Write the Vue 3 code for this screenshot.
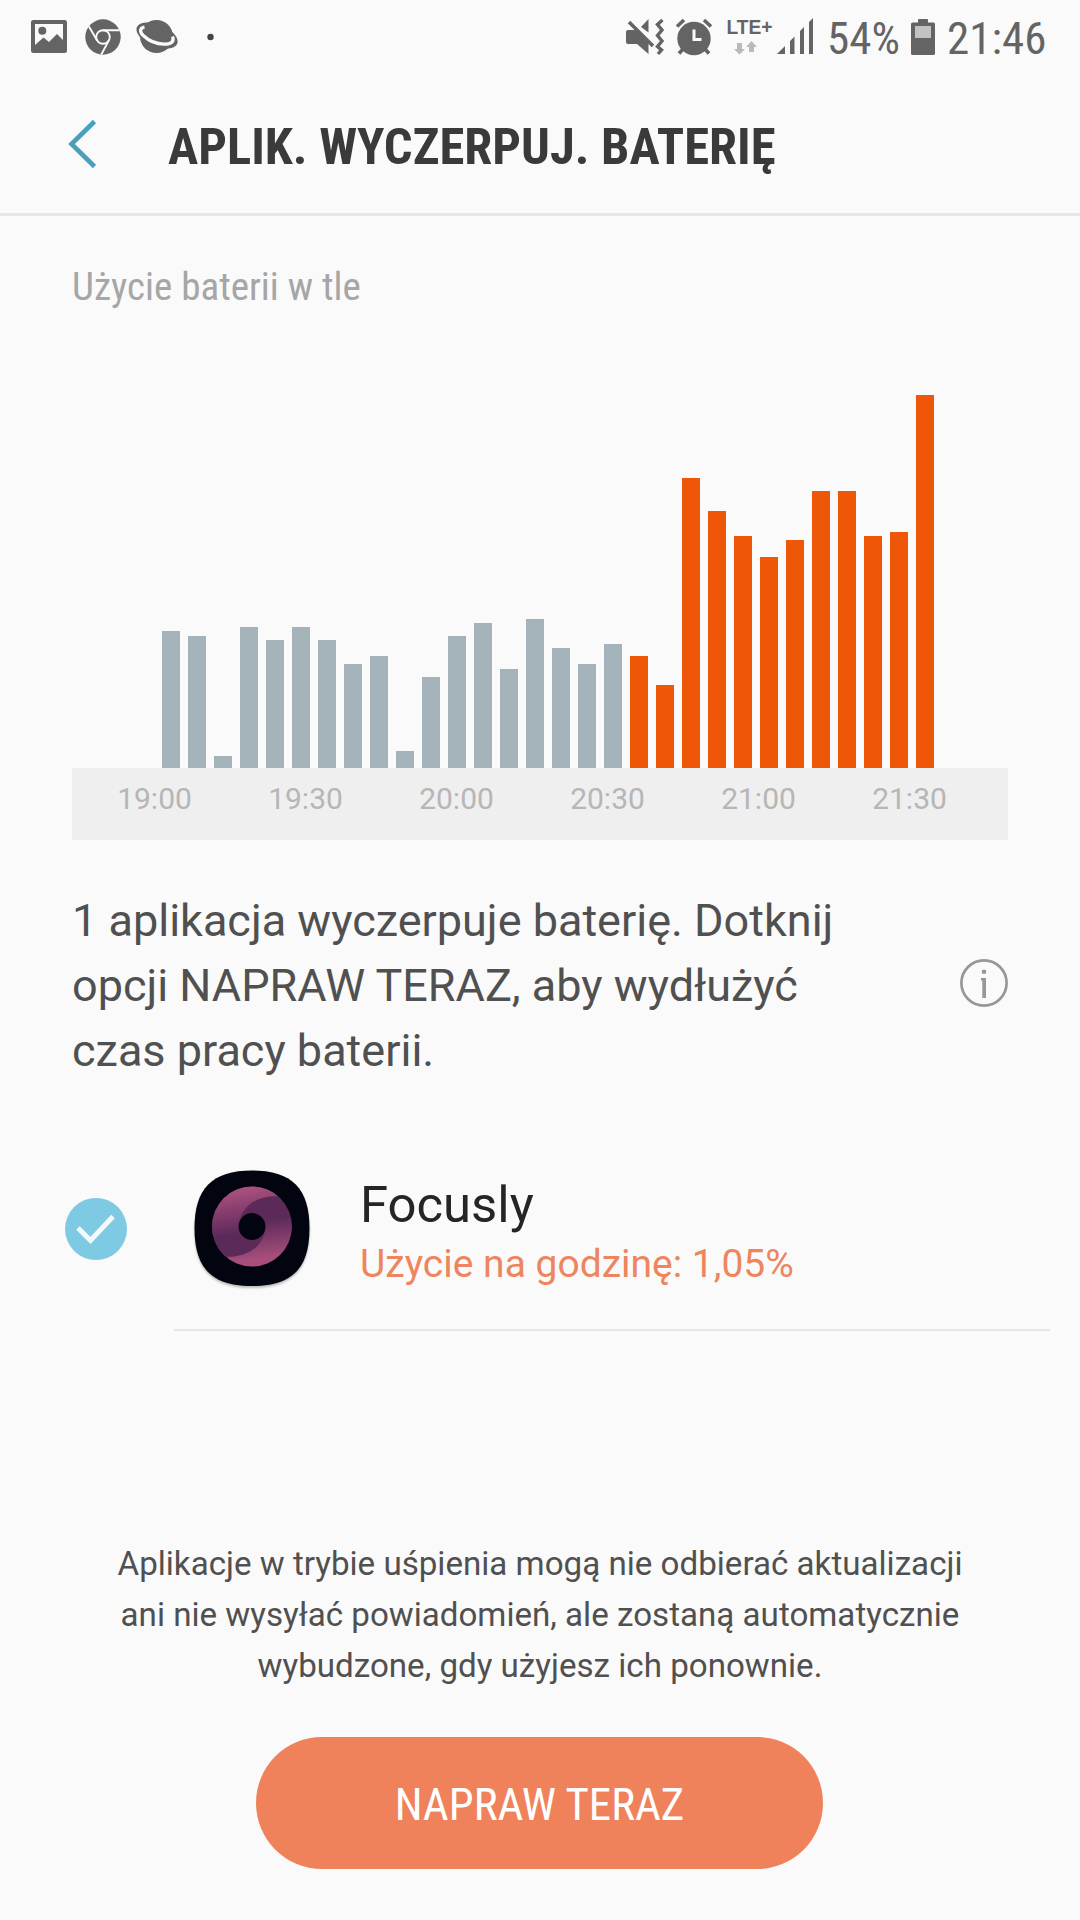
<script setup>
const quiet = [137, 132, 12, 141, 128, 141, 128, 104, 112, 17, 91, 132, 145, 99, 149, 120, 104, 124]
const heavy = [112, 83, 290, 257, 232, 211, 228, 277, 277, 232, 236, 373]
const bars = [
  ...quiet.map((h) => ({ h, heavy: false })),
  ...heavy.map((h) => ({ h, heavy: true })),
]
const hours = ['19:00', '19:30', '20:00', '20:30', '21:00', '21:30']
</script>

<template>
  <div class="screen">
    <div class="status">
      <svg class="notif" width="220" height="76" viewBox="0 0 220 76" fill="#646464">
        <path fill-rule="evenodd" d="M33.500 20H64.500Q67 20 67 22.500V50.500Q67 53 64.500 53H33.500Q31 53 31 50.500V22.500Q31 20 33.500 20ZM35 24V45L43.500 37.500L49 42L57 34L63 40V24Z" />
        <circle cx="42.300" cy="30.800" r="4" />
        <circle cx="103" cy="37" r="17.700" />
        <g fill="none" stroke="#fafafa" stroke-width="1.900">
          <circle cx="103" cy="37" r="6.800" />
          <path d="M103 30.200H119.500M97.100 40.400L88.800 26.200M108.900 40.400L101.300 54.500" />
        </g>
        <circle cx="156.500" cy="36.500" r="16.500" />
        <ellipse cx="157" cy="35.500" rx="21.800" ry="11" transform="rotate(22 157 35.500)" />
        <path d="M144.500 27.200C140 28 139 31.500 143.500 35.800C149 41 157 44 164 44.200C171.500 44.300 174.500 41.500 172.600 36.500" fill="none" stroke="#fafafa" stroke-width="3.300" />
        <circle cx="210.500" cy="37" r="3.200" fill="#444" />
      </svg>
      <svg class="system" width="200" height="76" viewBox="620 0 200 76" fill="#646464">
        <path d="M628 30H636L648.500 42V54L637 44H628Q626 44 626 42V32Q626 30 628 30Z" />
        <path d="M648.500 19V32.500L641 27Z" />
        <path d="M629 22L653 46" stroke="#646464" stroke-width="3.600" />
        <path d="M662.500 20L657.500 24.500L662 30L657.500 35.500L662 41L657.500 46.500L661.500 50L658 54" fill="none" stroke="#646464" stroke-width="3.400" />
        <circle cx="694" cy="38.500" r="16.700" />
        <path d="M677 26.500L684 20M711 26.500L704 20M683 49L679 53.500M705 49L709 53.500" stroke="#646464" stroke-width="3.600" />
        <path d="M694 29.500V39.500H701.500" fill="none" stroke="#fafafa" stroke-width="3" />
        <text x="726.500" y="34" class="lte" textLength="46" lengthAdjust="spacingAndGlyphs">LTE+</text>
        <path fill="#bababa" d="M737 43H742V49H745L739.500 54.500L734 49H737ZM749 52H754V47H757L751.500 41L746 47H749Z" />
        <path d="M777 54L785 46V54ZM790 54V41L794.500 36.500V54ZM800 54V31L804 27V54ZM809 54V22L813 18V54Z" />
      </svg>
      <span class="pct">54%</span>
      <svg class="battery" width="24" height="76" viewBox="0 0 24 76">
        <path fill="#646464" d="M7 20Q7 19 8 19H16Q17 19 17 20V22.500H22.500Q24 22.500 24 24V53.500Q24 55 22.500 55H1.500Q0 55 0 53.500V24Q0 22.500 1.500 22.500H7Z" />
        <path fill="#c2c2c2" d="M4 26H20V38H4Z" />
      </svg>
      <span class="clock">21:46</span>
    </div>

    <header class="header">
      <svg width="40" height="60" viewBox="0 0 40 60">
        <path d="M30.500 6.500L7.500 29L30.500 51.500" fill="none" stroke="#4a9fbd" stroke-width="4.600" />
      </svg>
      <h1>APLIK. WYCZERPUJ. BATERIĘ</h1>
    </header>

    <h2 class="caption">Użycie baterii w tle</h2>

    <section class="chart">
      <div class="bars">
        <div v-for="(bar, i) in bars" :key="i" class="bar" :class="{ heavy: bar.heavy }" :style="{ height: bar.h + 'px' }"></div>
      </div>
      <div class="axis"><span v-for="hour in hours" :key="hour">{{ hour }}</span></div>
    </section>

    <section class="summary">
      <p>1 aplikacja wyczerpuje baterię. Dotknij<br />opcji NAPRAW TERAZ, aby wydłużyć<br />czas pracy baterii.</p>
      <svg width="48" height="48" viewBox="0 0 48 48">
        <circle cx="24" cy="24" r="22.600" fill="none" stroke="#979797" stroke-width="2.700" />
        <circle cx="24" cy="12.800" r="2.300" fill="#979797" />
        <path d="M21 19H26V39H22.300V21.500H21Z" fill="#979797" />
      </svg>
    </section>

    <section class="app">
      <svg class="check" width="62" height="62" viewBox="0 0 62 62">
        <circle cx="31" cy="31" r="31" fill="#7ecae2" />
        <path d="M13 30L25.500 42.500L48 18.500" fill="none" stroke="#f4fafc" stroke-width="5" />
      </svg>
      <svg class="logo" width="120" height="124" viewBox="0 -1 120 124">
        <defs>
          <linearGradient id="petalLeft" gradientUnits="userSpaceOnUse" x1="56" y1="22" x2="62" y2="64">
            <stop offset="0" stop-color="#a74e7c" />
            <stop offset="1" stop-color="#5b2a59" />
          </linearGradient>
          <linearGradient id="petalRight" gradientUnits="userSpaceOnUse" x1="70" y1="52" x2="75" y2="90">
            <stop offset="0" stop-color="#5b2a59" />
            <stop offset="1" stop-color="#a74e7c" />
          </linearGradient>
          <clipPath id="ring"><circle cx="60" cy="58.500" r="40" /></clipPath>
        </defs>
        <path class="tile" fill="#02040f" d="M60 2.500C100 2.500 117.500 20.500 117.500 60.500S100 118 60 118S2.500 100.500 2.500 60.500S20 2.500 60 2.500Z" />
        <circle cx="60" cy="58.500" r="40" fill="url(#petalRight)" />
        <path clip-path="url(#ring)" fill="url(#petalLeft)" d="M88 28.500C62 26 47 42 47 58.500H73.300C73.300 76 58 90 32 88.800L0 120V0H110Z" />
        <circle cx="60" cy="58.500" r="13.400" fill="#02040f" />
      </svg>
      <div class="details">
        <span class="name">Focusly</span>
        <span class="usage">Użycie na godzinę: 1,05%</span>
      </div>
    </section>

    <p class="note">Aplikacje w trybie uśpienia mogą nie odbierać aktualizacji<br />ani nie wysyłać powiadomień, ale zostaną automatycznie<br />wybudzone, gdy użyjesz ich ponownie.</p>
    <button class="fix">NAPRAW TERAZ</button>
  </div>
</template>

<style>
body {
  margin: 0;
  background: #fafafa;
}
</style>

<style scoped>
.screen {
  box-sizing: border-box;
  width: 1080px;
  height: 1920px;
  overflow: hidden;
  display: flex;
  flex-direction: column;
  background: #fafafa;
  font-family: Roboto, sans-serif;
}
svg {
  display: block;
  flex: none;
}
h1,
h2,
p {
  margin: 0;
  white-space: nowrap;
}
.status {
  display: flex;
  height: 77px;
  line-height: 77px;
  font-size: 45px;
  color: #646464;
  white-space: nowrap;
}
.system {
  margin-left: 400px;
}
.lte {
  font: bold 20px "Liberation Sans", Arial, sans-serif;
}
.pct,
.clock,
.header h1,
.caption,
.fix {
  font-family: "Roboto Condensed", Roboto, sans-serif;
  font-stretch: 75%;
}
.pct {
  width: 84px;
  margin-left: 7px;
}
.clock {
  margin-left: 12px;
}
.header {
  display: flex;
  align-items: center;
  height: 136px;
  padding-left: 64px;
  border-bottom: 3px solid #e6e6e6;
}
.header h1 {
  margin-left: 64px;
  padding-top: 4px;
  font-size: 50.6px;
  font-weight: 700;
  line-height: 62px;
  color: #3a3a3a;
}
.caption {
  margin: 47px 0 0 72px;
  font-size: 39px;
  font-weight: 400;
  line-height: 48px;
  color: #a6a6a6;
}
.chart {
  width: 936px;
  margin: 82px 0 0 72px;
}
.bars {
  display: flex;
  align-items: flex-end;
  gap: 8px;
  height: 375px;
  padding-left: 90px;
}
.bar {
  width: 18px;
  background: #a4b2b9;
}
.bar.heavy {
  background: #ee5708;
}
.axis {
  box-sizing: border-box;
  display: flex;
  height: 72px;
  padding-left: 7px;
  background: #efefef;
  color: #b6b6b6;
  font-size: 30px;
  line-height: 61px;
}
.axis span {
  width: 151px;
  text-align: center;
}
.summary {
  display: flex;
  align-items: center;
  justify-content: space-between;
  margin: 48px 72px 0;
  height: 195px;
}
.summary p {
  padding-bottom: 1px;
  font-size: 45px;
  line-height: 65px;
  color: #505050;
}
.summary svg {
  margin-top: -5px;
}
.app {
  display: flex;
  align-items: center;
  position: relative;
  height: 204px;
  margin-top: 44px;
  padding-left: 65px;
}
.app::after {
  content: "";
  position: absolute;
  left: 174px;
  right: 30px;
  bottom: 0;
  height: 2px;
  background: #e6e6e6;
}
.logo {
  margin-left: 65px;
}
.tile {
  filter: drop-shadow(0 2px 1px rgba(0, 0, 0, 0.25));
}
.details {
  display: flex;
  flex-direction: column;
  margin-left: 48px;
  padding-top: 8px;
  white-space: nowrap;
}
.name {
  font-size: 50.8px;
  line-height: 61px;
  color: #252525;
}
.usage {
  font-size: 39px;
  line-height: 58px;
  color: #ee855e;
}
.note {
  margin-top: 207px;
  font-size: 33.15px;
  line-height: 51px;
  text-align: center;
  color: #505050;
}
.fix {
  align-self: center;
  width: 567px;
  height: 132px;
  margin: 46px 1px 0 0;
  padding: 3px 0 0;
  border: 0;
  border-radius: 66px;
  background: #f0825b;
  color: #fff;
  font-size: 44.9px;
}
</style>
